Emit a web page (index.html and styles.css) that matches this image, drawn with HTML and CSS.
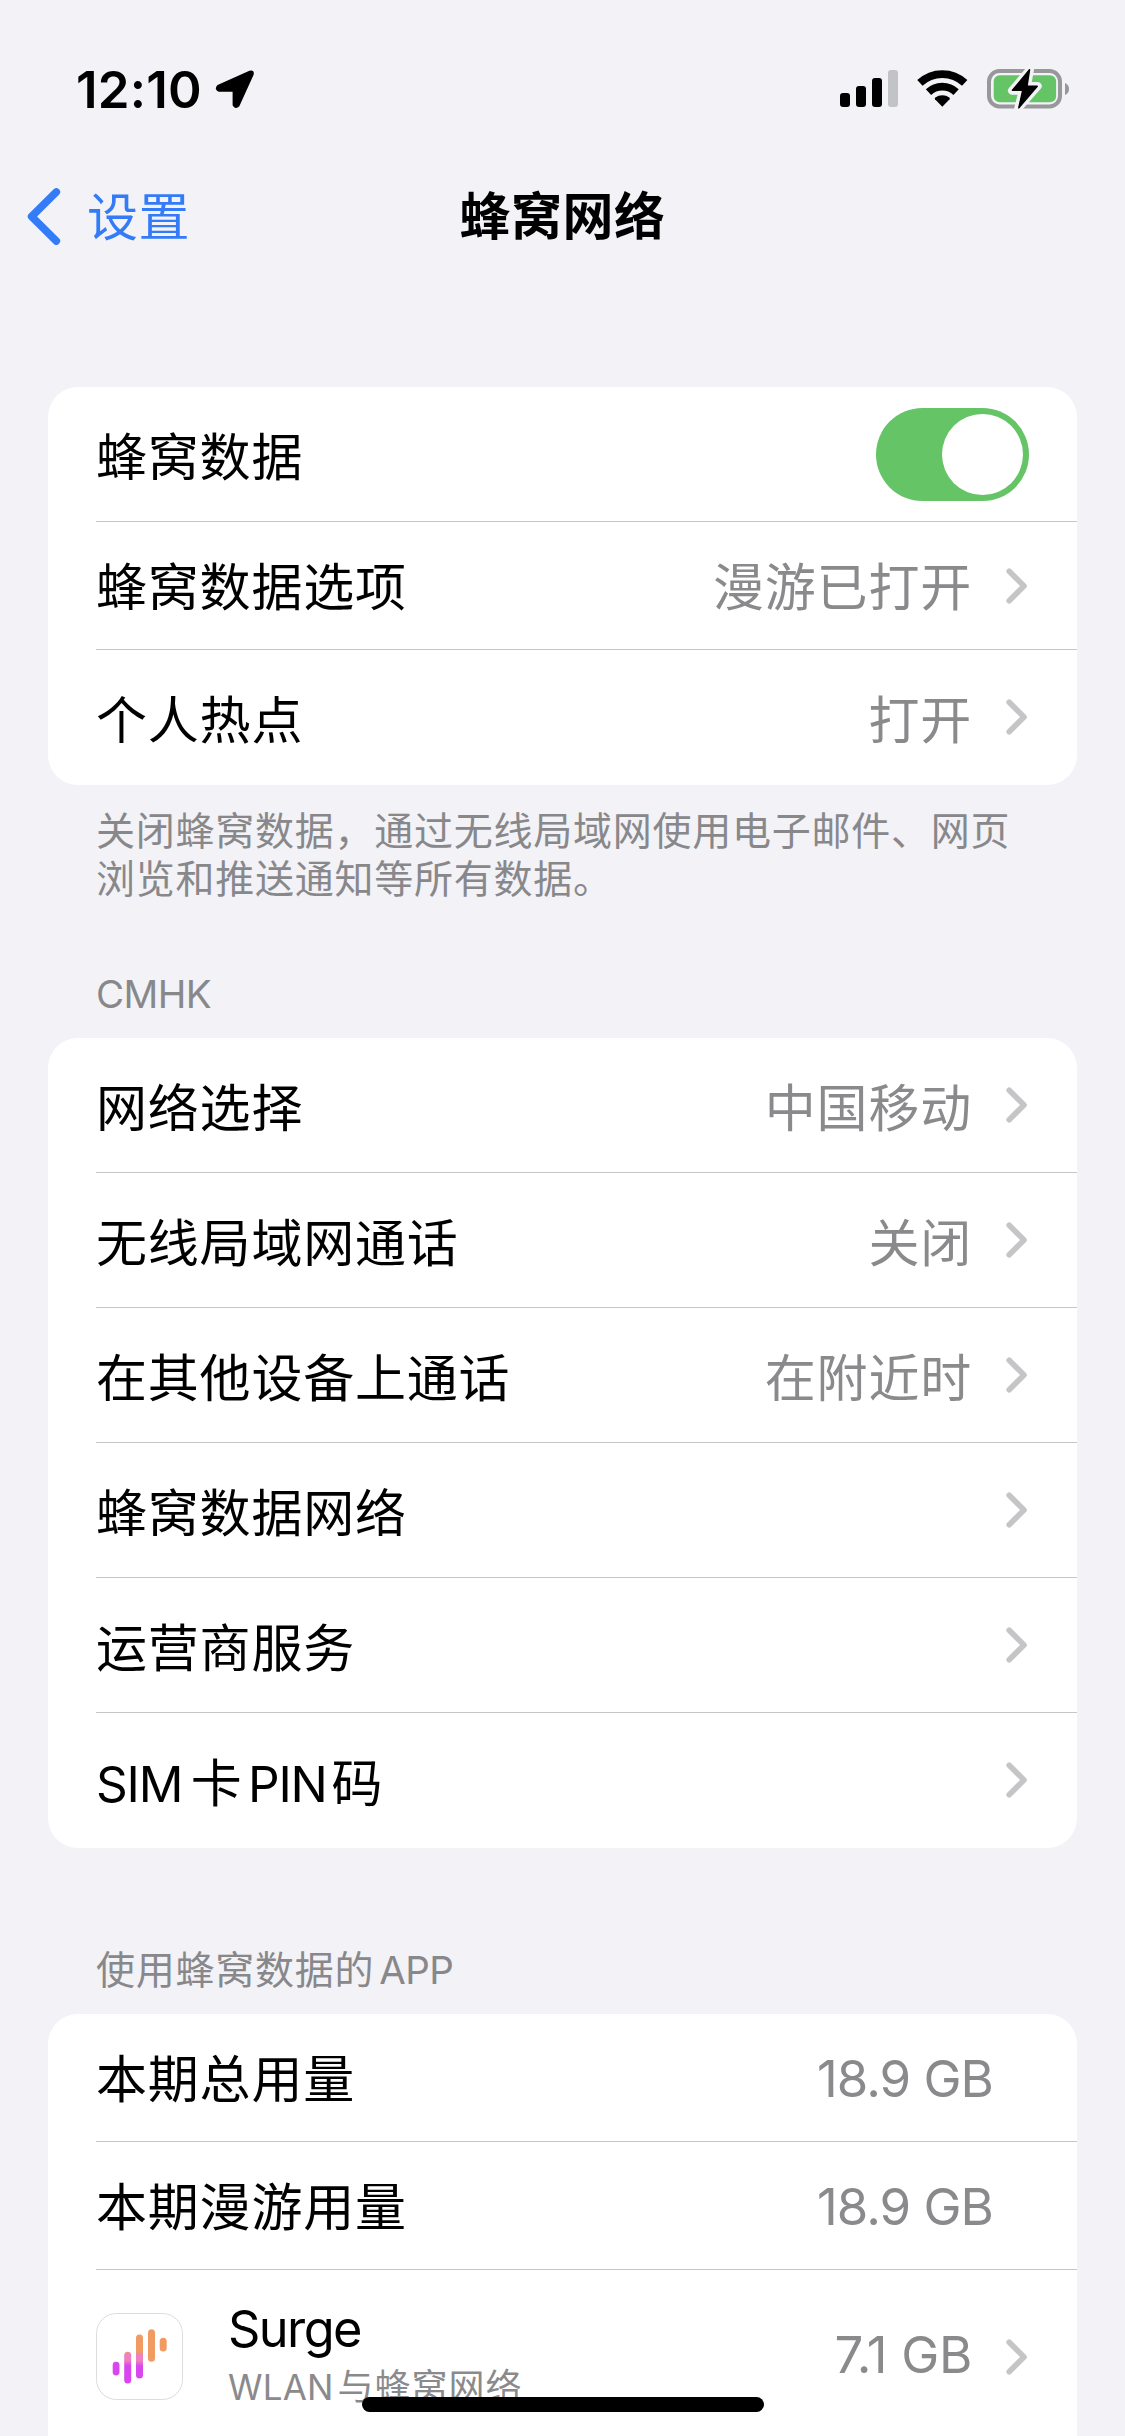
FILE: index.html
```html
<!DOCTYPE html>
<html lang="zh-CN">
<head>
<meta charset="utf-8">
<title>蜂窝网络</title>
<link rel="stylesheet" href="styles.css">
</head>
<body>
<svg width="0" height="0" class="defs">
  <symbol id="chevron" viewBox="0 0 22 36"><path d="M3.2 3.2 L18 18 L3.2 32.8" fill="none" stroke="#c5c5c7" stroke-width="5.6" stroke-linecap="round" stroke-linejoin="round"/></symbol>
</svg>
<div class="screen">
  <header class="status">
    <div class="status-left">
      <span class="time">12:10</span>
      <svg class="location" width="40" height="39" viewBox="0 0 40 39"><path d="M3 16 L34.8 1.6 Q38.6 .6 37.6 4.6 L23.4 35.8 Q20.600 38.4 18.600 35 V20.800 H4 Q.2 19.4 3 16 Z" stroke="#000" stroke-width="2" stroke-linejoin="round"/></svg>
    </div>
    <div class="status-right">
      <svg width="58" height="37" viewBox="0 0 58 37"><rect x="0" y="23" width="10" height="14" rx="3"/><rect x="16" y="16" width="10" height="21" rx="3"/><rect x="32" y="8" width="10" height="29" rx="3"/><rect x="48" y="0" width="10" height="37" rx="3" fill="#c2c3c5"/></svg>
      <svg class="wifi" width="51" height="38" viewBox="0 0 51 38"><g fill="none" stroke="#000" stroke-width="7.8"><path d="M2.9 12.9 A32.8 32.8 0 0 1 47.7 12.9"/><path d="M11.5 22.1 A20.2 20.2 0 0 1 39.1 22.1"/></g><path d="M25.3 36.8 L18 29.3 Q17.4 28.4 18.3 27.6 A11.5 11.5 0 0 1 32.3 27.6 Q33.2 28.4 32.6 29.3 Z"/></svg>
      <svg class="battery" width="84" height="42" viewBox="0 0 84 42"><rect x="3" y="3" width="71" height="35.5" rx="10.5" fill="none" stroke="#98989b" stroke-width="4"/><rect x="7.7" y="7.2" width="62.4" height="27" rx="6" fill="#65c466"/><path d="M79 15 Q83 16.5 83 21 Q83 25.500 79 27 Z" fill="#98989b"/><path d="M44 1.5 L26 22.7 H36.700 L32.3 40.2 L51.7 18 H41 Z" fill="#f2f2f7" stroke="#f2f2f7" stroke-width="8" stroke-linejoin="round"/><path d="M43.500 1.800 L26.500 22.300 H36.700 L32.8 39.8 L51.2 18.200 H41 Z" stroke="#000" stroke-width="1.500" stroke-linejoin="round"/></svg>
    </div>
  </header>
  <nav class="nav">
    <div class="back">
      <svg width="34" height="57" viewBox="0 0 34 57"><path d="M29.300 4 L4.600 28.500 L29.300 53" fill="none" stroke="#337bf7" stroke-width="7.600" stroke-linecap="round" stroke-linejoin="round"/></svg>
      <span>设置</span>
    </div>
    <h1 class="title">蜂窝网络</h1>
    <div></div>
  </nav>

  <main>
    <section class="card">
      <div class="row"><span class="label">蜂窝数据</span><span class="toggle"><i class="knob"></i></span></div>
      <div class="row short"><span class="label">蜂窝数据选项</span><span class="value">漫游已打开</span><svg class="chev"><use href="#chevron"/></svg></div>
      <div class="row"><span class="label">个人热点</span><span class="value">打开</span><svg class="chev"><use href="#chevron"/></svg></div>
    </section>
    <p class="footnote">关闭蜂窝数据，通过无线局域网使用电子邮件、网页浏览和推送通知等所有数据。</p>

    <h2 class="heading carrier"><span class="latin">CMHK</span></h2>
    <section class="card">
      <div class="row"><span class="label">网络选择</span><span class="value">中国移动</span><svg class="chev"><use href="#chevron"/></svg></div>
      <div class="row"><span class="label">无线局域网通话</span><span class="value">关闭</span><svg class="chev"><use href="#chevron"/></svg></div>
      <div class="row"><span class="label">在其他设备上通话</span><span class="value">在附近时</span><svg class="chev"><use href="#chevron"/></svg></div>
      <div class="row"><span class="label">蜂窝数据网络</span><svg class="chev"><use href="#chevron"/></svg></div>
      <div class="row"><span class="label">运营商服务</span><svg class="chev"><use href="#chevron"/></svg></div>
      <div class="row"><span class="label"><span class="latin">SIM</span><span class="mid">卡</span><span class="latin">PIN</span><span class="end">码</span></span><svg class="chev"><use href="#chevron"/></svg></div>
    </section>

    <h2 class="heading apps">使用蜂窝数据的<span class="latin app">APP</span></h2>
    <section class="card last">
      <div class="row short"><span class="label">本期总用量</span><span class="value size wide">18.9 GB</span></div>
      <div class="row short"><span class="label">本期漫游用量</span><span class="value size wide">18.9 GB</span></div>
      <div class="row tall">
        <svg class="icon" width="87" height="87" viewBox="0 0 87 87">
          <defs><linearGradient id="surge" gradientUnits="userSpaceOnUse" x1="34" y1="16" x2="32" y2="70"><stop offset=".42" stop-color="#f19a62"/><stop offset=".47" stop-color="#ee80c0"/><stop offset=".58" stop-color="#ee80c0"/><stop offset=".68" stop-color="#d946ef"/></linearGradient></defs>
          <rect x=".5" y=".5" width="86" height="86" rx="20" fill="#fff" stroke="#dcdcdc"/>
          <g fill="url(#surge)"><rect x="16.700" y="48.700" width="6.800" height="13.700" rx="3.400" fill="#d946ef"/><rect x="28.200" y="38.700" width="7" height="31.700" rx="3.500"/><rect x="40" y="21.500" width="7" height="44" rx="3.500"/><rect x="52" y="16.300" width="7" height="32.400" rx="3.500" fill="#f19a62"/><rect x="63.700" y="24.700" width="7" height="13.700" rx="3.500" fill="#f19a62"/></g>
        </svg>
        <div class="app-text"><span class="app-name">Surge</span><span class="app-sub"><span class="latin">WLAN</span>与蜂窝网络</span></div>
        <span class="value size seven">7.1 GB</span><svg class="chev"><use href="#chevron"/></svg>
      </div>
    </section>
  </main>
  <div class="home"></div>
</div>
</body>
</html>
```
FILE: styles.css
```css
* { box-sizing: border-box; }
body {
  margin: 0;
  background: #f2f2f7;
  font-family: "Noto Sans CJK SC", sans-serif;
  color: #000;
}
.defs { display: none; }
.screen {
  position: relative;
  width: 1125px;
  height: 2436px;
  overflow: hidden;
  display: flex;
  flex-direction: column;
}
.latin { font-family: Inter, sans-serif; line-height: 0; }

.status {
  height: 132px;
  flex: none;
  display: flex;
  justify-content: space-between;
  padding: 0 55px 0 76px;
}
.status-left { display: flex; align-items: flex-start; padding-top: 70px; gap: 13px; }
.time {
  width: 126px;
  font: 600 51px/39px Inter, sans-serif;
  letter-spacing: .2px;
}
.status-right { display: flex; align-items: flex-start; padding-top: 70px; }
.wifi { margin-left: 19px; }
.battery { margin: -2px 0 0 18px; }

.nav {
  height: 168px;
  flex: none;
  display: grid;
  grid-template-columns: 1fr auto 1fr;
  align-items: center;
}
.back {
  display: flex;
  align-items: center;
  gap: 26px;
  padding-left: 27px;
  color: #337bf7;
  font-size: 51px;
  letter-spacing: .5px;
}
.back span { line-height: 60px; margin-top: -5px; }
.title { margin: 0 0 6px; font-size: 51px; line-height: 60px; font-weight: 600; letter-spacing: .5px; }

main { padding: 87px 48px 0; }
.card { background: #fff; border-radius: 30px; }
.last { border-radius: 30px 30px 0 0; height: 440px; }
.row {
  height: 135px;
  margin-left: 48px;
  padding-right: 49px;
  display: flex;
  align-items: center;
  border-bottom: 1px solid #c6c6c8;
}
.row:last-child { border-bottom-color: transparent; }
.short { height: 128px; }
.short .label, .short .value { margin-top: -3px; }
.label, .value {
  font-size: 51px;
  line-height: 60px;
  letter-spacing: .8px;
  white-space: nowrap;
}
.label { margin-right: auto; }
.value { color: #8a8a8d; }
.chev { width: 22px; height: 36px; margin-left: 34px; flex: none; }
.label .latin { font-size: 49.5px; letter-spacing: -1.2px; }
.mid { margin: 0 5.5px 0 8.5px; }
.end { margin-left: 5px; }

.toggle { width: 153px; height: 93px; border-radius: 47px; background: #65c466; padding: 6px; display: flex; justify-content: flex-end; margin-right: -1px; }
.knob { width: 81px; height: 81px; border-radius: 50%; background: #fff; }

.footnote, .heading {
  margin: 0 48px;
  color: #88888b;
  font-size: 39px;
  font-weight: 400;
  letter-spacing: .75px;
  line-height: 48px;
}
.footnote { padding-top: 19px; height: 182px; width: 920px; }
.heading .latin { font-size: 38.5px; letter-spacing: -.6px; }
.carrier { height: 71px; }
.apps { padding-top: 95px; height: 166px; }
.app { margin-left: 5px; }

.value.size { font-family: Inter, sans-serif; font-size: 51px; letter-spacing: -1px; }
.short .value.size { margin-top: 2px; }
.value.wide { margin-right: 35px; }
.value.seven { letter-spacing: -.3px; margin-top: -3px; }
.tall { height: 174px; }
.icon { flex: none; }
.app-text { display: flex; flex-direction: column; margin: -6px auto 0 45px; }
.app-name { font: 400 50.5px/60px Inter, sans-serif; letter-spacing: -1.6px; margin-top: -1px; }
.app-sub { margin-top: 1px; font-size: 36px; line-height: 48px; letter-spacing: 1px; color: #8a8a8d; white-space: nowrap; }
.app-sub .latin { font-size: 35px; letter-spacing: .2px; margin-right: 4px; }

/* Home indicator floats above the list */
.home {
  position: absolute;
  left: 362px;
  top: 2397px;
  width: 402px;
  height: 15px;
  border-radius: 8px;
  background: #000;
}
```
